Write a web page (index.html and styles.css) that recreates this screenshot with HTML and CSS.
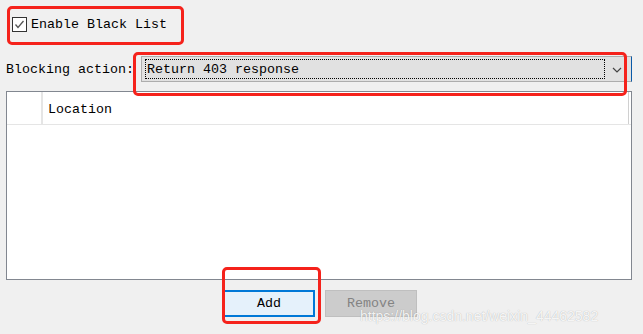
FILE: index.html
```html
<!DOCTYPE html>
<html lang="en">
<head>
  <meta charset="UTF-8" />
  <title>Black List</title>
  <link rel="stylesheet" href="styles.css">
</head>
<body>

  <div class="page">
    <label class="enable">
      <span class="check">
        <svg width="13" height="13" viewBox="0 0 13 13"><path d="M2.5 6.5 L5 9.5 L10.5 3" fill="none" stroke="#555" stroke-width="1.3"/></svg>
      </span>
      Enable Black List
    </label>

    <div class="action">
      <span class="action-label">Blocking action:</span>
      <div class="combo">
        <div class="combo-value"><span>Return 403 response</span></div>
        <svg class="combo-arrow" width="10" height="6" viewBox="0 0 10 6"><path d="M1 1 L5 5 L9 1" fill="none" stroke="#444" stroke-width="1.2"/></svg>
      </div>
    </div>

    <div class="grid">
      <div class="grid-head">
        <div class="col-idx"></div>
        <div class="col-loc">Location</div>
        <div class="col-end"></div>
      </div>
      <div class="grid-body"></div>
    </div>

    <div class="buttons">
      <button class="btn btn-primary">Add</button>
      <button class="btn" disabled>Remove</button>
    </div>

    <div class="watermark">https://blog.csdn.net/weixin_44462582</div>

    <div class="mark mark-enable"></div>
    <div class="mark mark-action"></div>
    <div class="mark mark-add"></div>
  </div>

</body>
</html>
```

FILE: styles.css
```css
* {
  box-sizing: border-box;
}

body {
  margin: 0;
  background: #f0f0f0;
  font-family: 'Liberation Mono', 'DejaVu Sans Mono', monospace;
  font-size: 13.33px;
  color: #000;
}

.page {
  position: relative;
  width: 643px;
  height: 334px;
  padding-top: 16px;
}

.enable {
  display: flex;
  align-items: center;
  gap: 4px;
  margin-left: 12px;
  height: 16px;
}

.check {
  width: 15px;
  height: 15px;
  border: 1px solid #333;
  background: white;
  display: flex;
  align-items: center;
  justify-content: center;
}

.action {
  display: flex;
  align-items: center;
  margin-top: 24px;
  margin-left: 6px;
  height: 26px;
}

.action-label {
  width: 135px;
}

.combo {
  width: 491px;
  height: 26px;
  background: #e1e1e1;
  border: 1px solid #adadad;
  border-right-color: #0a5aa8;
  display: flex;
  align-items: center;
  padding: 0 0 0 3px;
}

.combo-value {
  flex: 1;
  height: 20px;
  border: 1px dotted #000;
  display: flex;
  align-items: center;
  padding-left: 1px;
}

.combo-arrow {
  margin: 2px 9px 0 7px;
}

.grid {
  margin: 9px 0 0 6px;
  width: 626px;
  height: 189px;
  border: 1px solid #828790;
  background: white;
  display: flex;
  flex-direction: column;
}

.grid-head {
  display: flex;
  height: 33px;
  border-bottom: 1px solid #e5e5e5;
}

.col-idx {
  width: 36px;
  border-right: 2px solid #e5e5e5;
}

.col-loc {
  flex: 1;
  padding: 2px 0 0 5px;
  display: flex;
  align-items: center;
  border-right: 1px solid #d0d0d0;
}

.col-end {
  width: 2px;
}

.grid-body {
  flex: 1;
}

.buttons {
  display: flex;
  gap: 10px;
  margin: 10px 0 0 223px;
}

.btn {
  width: 92px;
  height: 27px;
  font-family: inherit;
  font-size: 13.33px;
  background: #e1e1e1;
  border: 1px solid #adadad;
  padding: 0;
  color: #000;
}

.btn-primary {
  background: #e5f1fb;
  border: 2px solid #0078d7;
}

.btn:disabled {
  background: #cccccc;
  border-color: #bfbfbf;
  color: #838383;
}

.watermark {
  position: absolute;
  left: 360px;
  top: 309px;
  line-height: 15px;
  font-family: 'Liberation Sans', sans-serif;
  font-size: 14px;
  color: rgba(255, 255, 255, 0.9);
  text-shadow: 0 0 1px rgba(0, 0, 0, 0.3);
}

.mark {
  position: absolute;
  border: 3px solid #f5221b;
  border-radius: 5px;
}

.mark-enable {
  left: 7px;
  top: 6px;
  width: 177px;
  height: 39px;
}

.mark-action {
  left: 133px;
  top: 52px;
  width: 494px;
  height: 44px;
}

.mark-add {
  left: 222px;
  top: 267px;
  width: 99px;
  height: 57px;
}
```
